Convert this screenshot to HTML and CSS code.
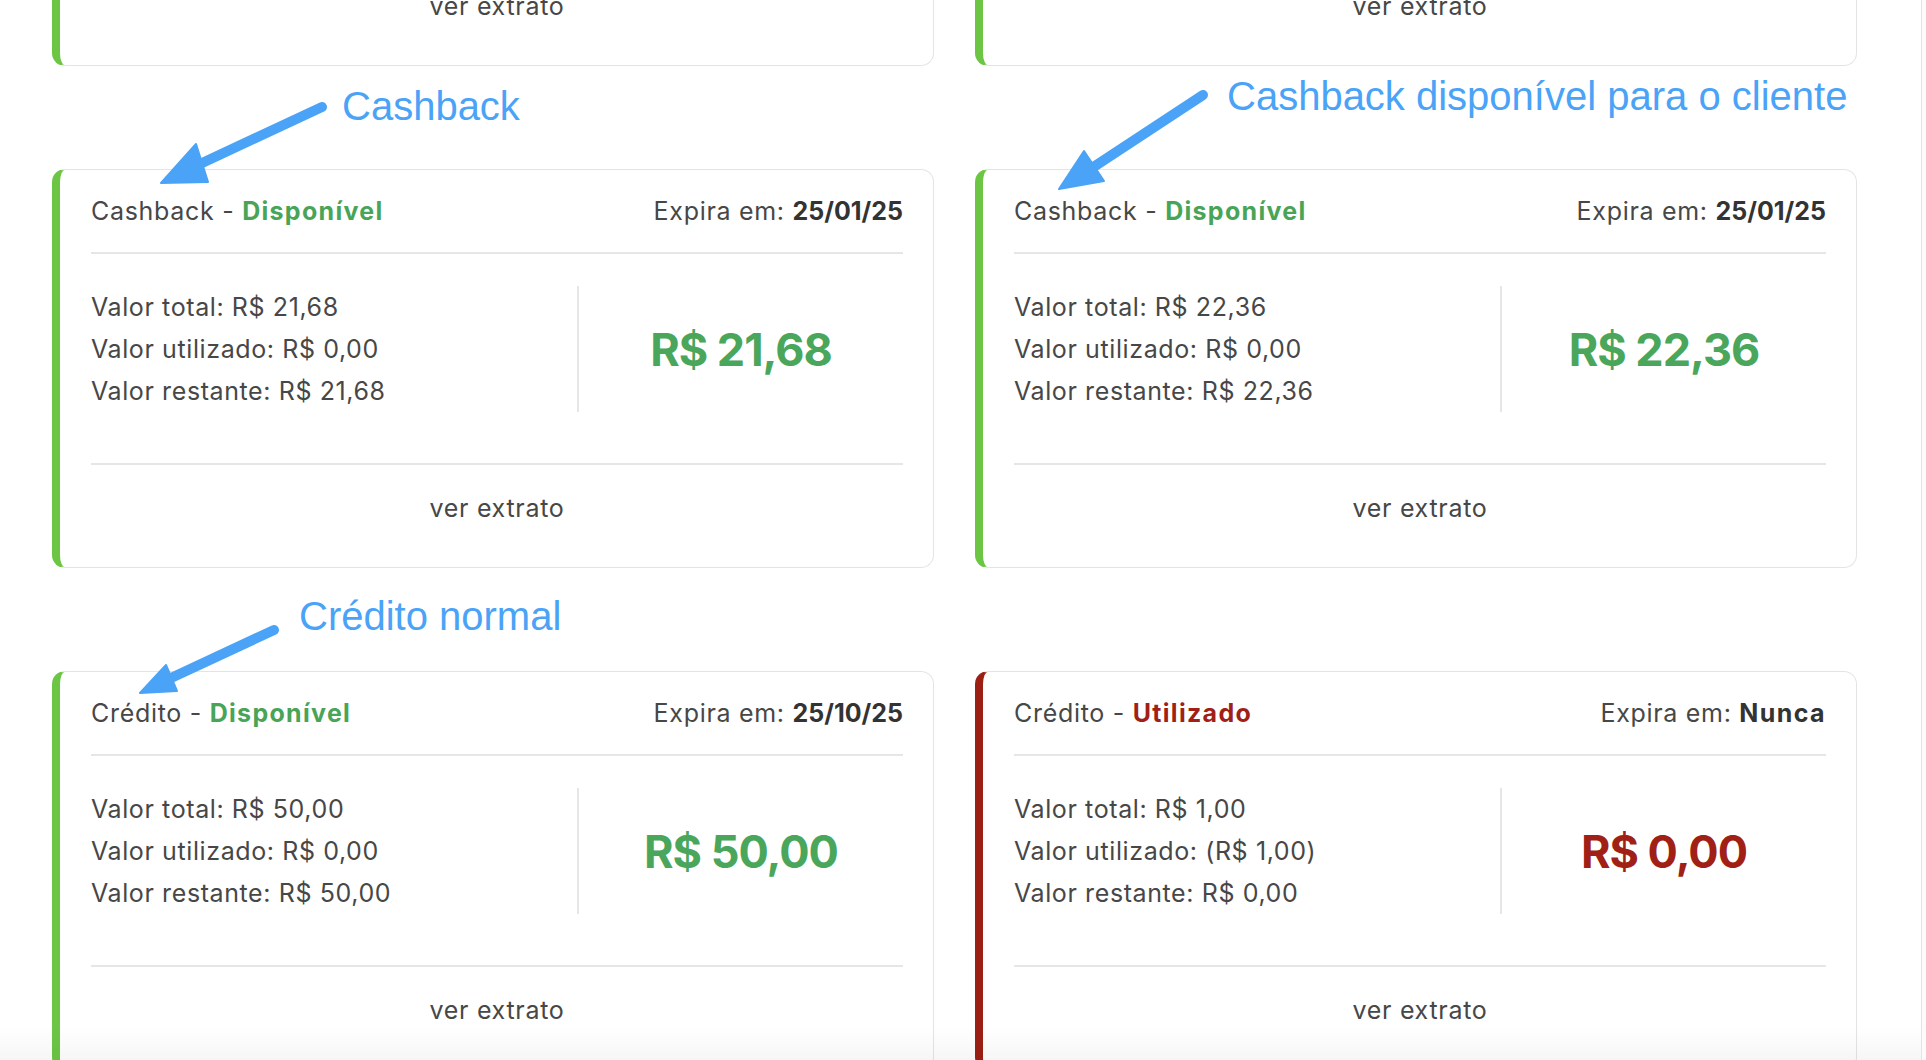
FILE: index.html
```html
<!DOCTYPE html>
<html lang="pt-BR">
<head>
<meta charset="utf-8">
<title>Créditos</title>
<link rel="stylesheet" href="styles.css">
</head>
<body>
<div class="page">
  <div class="grid">
    <div class="card">
      <div class="card-head"><span>Cashback - <b class="ok">Disponível</b></span><span>Expira em: <b>25/01/25</b></span></div>
      <div class="card-body">
        <div class="col-left"><div>Valor total: R$ 10,00</div><div>Valor utilizado: R$ 0,00</div><div>Valor restante: R$ 10,00</div></div>
        <div class="col-right"><span class="amount ok">R$ 10,00</span></div>
      </div>
      <div class="card-foot">ver extrato</div>
    </div>
    <div class="card">
      <div class="card-head"><span>Cashback - <b class="ok">Disponível</b></span><span>Expira em: <b>25/01/25</b></span></div>
      <div class="card-body">
        <div class="col-left"><div>Valor total: R$ 10,00</div><div>Valor utilizado: R$ 0,00</div><div>Valor restante: R$ 10,00</div></div>
        <div class="col-right"><span class="amount ok">R$ 10,00</span></div>
      </div>
      <div class="card-foot">ver extrato</div>
    </div>

    <div class="card">
      <div class="card-head"><span>Cashback - <b class="ok">Disponível</b></span><span>Expira em: <b>25/01/25</b></span></div>
      <div class="card-body">
        <div class="col-left"><div>Valor total: R$ 21,68</div><div>Valor utilizado: R$ 0,00</div><div>Valor restante: R$ 21,68</div></div>
        <div class="col-right"><span class="amount ok">R$ 21,68</span></div>
      </div>
      <div class="card-foot">ver extrato</div>
    </div>
    <div class="card">
      <div class="card-head"><span>Cashback - <b class="ok">Disponível</b></span><span>Expira em: <b>25/01/25</b></span></div>
      <div class="card-body">
        <div class="col-left"><div>Valor total: R$ 22,36</div><div>Valor utilizado: R$ 0,00</div><div>Valor restante: R$ 22,36</div></div>
        <div class="col-right"><span class="amount ok">R$ 22,36</span></div>
      </div>
      <div class="card-foot">ver extrato</div>
    </div>

    <div class="card">
      <div class="card-head"><span>Crédito - <b class="ok">Disponível</b></span><span>Expira em: <b>25/10/25</b></span></div>
      <div class="card-body">
        <div class="col-left"><div>Valor total: R$ 50,00</div><div>Valor utilizado: R$ 0,00</div><div>Valor restante: R$ 50,00</div></div>
        <div class="col-right"><span class="amount ok">R$ 50,00</span></div>
      </div>
      <div class="card-foot">ver extrato</div>
    </div>
    <div class="card used">
      <div class="card-head"><span>Crédito - <b class="bad">Utilizado</b></span><span>Expira em: <b class="word">Nunca</b></span></div>
      <div class="card-body">
        <div class="col-left"><div>Valor total: R$ 1,00</div><div>Valor utilizado: (R$ 1,00)</div><div>Valor restante: R$ 0,00</div></div>
        <div class="col-right"><span class="amount bad">R$ 0,00</span></div>
      </div>
      <div class="card-foot">ver extrato</div>
    </div>
  </div>

  <svg class="notes" width="1926" height="1060" viewBox="0 0 1926 1060">
    <g class="arrow">
      <line x1="322" y1="107" x2="200" y2="164"/>
      <polygon points="161,183 196,144 208,182"/>
      <line x1="1203" y1="95" x2="1092" y2="168"/>
      <polygon points="1059,189 1084,151 1104,181"/>
      <line x1="274" y1="630" x2="171" y2="678"/>
      <polygon points="140,693 166,665 177,691"/>
    </g>
    <text class="note" x="342" y="119.5">Cashback</text>
    <text class="note" x="1227" y="109.5">Cashback disponível para o cliente</text>
    <text class="note" x="299" y="630">Crédito normal</text>
  </svg>
  <div class="fade"></div>
  <div class="track"></div>
</div>
</body>
</html>
```
FILE: styles.css
```css
html, body {
  margin: 0;
  padding: 0;
  background: #ffffff;
}
body {
  font-family: Inter, "Noto Sans", "DejaVu Sans", sans-serif;
  color: #474747;
  overflow: hidden;
}
.page {
  position: relative;
  width: 1926px;
  height: 1060px;
  overflow: hidden;
}
.grid {
  display: grid;
  grid-template-columns: 882px 882px;
  column-gap: 41px;
  row-gap: 103px;
  padding-left: 52px;
  margin-top: -333px;
}
.card {
  box-sizing: border-box;
  height: 399px;
  border: 1.5px solid #e4e4e4;
  border-left: 8px solid #6cc644;
  border-radius: 13px;
  background: #fff;
  padding: 0 30px 0 31px;
  display: flex;
  flex-direction: column;
}
.card.used {
  border-left-color: #9c1f14;
}
.card-head {
  box-sizing: border-box;
  height: 84px;
  display: flex;
  justify-content: space-between;
  align-items: center;
  border-bottom: 2px solid #e6e6e6;
  font-size: 25px;
  letter-spacing: 0.7px;
}
.card-head b {
  font-weight: 700;
  color: #333;
  letter-spacing: 0;
}
.card-head b.word { letter-spacing: 1.4px; }
.card-head b.ok { color: #48a457; letter-spacing: 1.3px; }
.card-head b.bad { color: #a01f16; letter-spacing: 1.3px; }
.card-body {
  display: flex;
  padding: 32px 0 51px;
  border-bottom: 2px solid #e6e6e6;
}
.col-left {
  width: 486px;
  font-size: 25px;
  line-height: 42px;
  letter-spacing: 0.6px;
}
.col-right {
  flex: 1;
  border-left: 2px solid #e6e6e6;
  display: flex;
  align-items: center;
  justify-content: center;
}
.amount {
  font-size: 45px;
  font-weight: 700;
  letter-spacing: -1px;
}
.amount.ok { color: #4aa65b; }
.amount.bad { color: #a01f16; }
.card-foot {
  padding-top: 23px;
  line-height: 40px;
  font-size: 25px;
  letter-spacing: 0.7px;
  text-align: center;
}
.notes {
  position: absolute;
  left: 0;
  top: 0;
  pointer-events: none;
}
.arrow line {
  stroke: #4aa3f6;
  stroke-width: 10;
  stroke-linecap: round;
}
.arrow polygon {
  fill: #4aa3f6;
  stroke: #4aa3f6;
  stroke-width: 2;
  stroke-linejoin: round;
}
.note {
  font-family: "Liberation Sans", Arial, sans-serif;
  font-size: 40px;
  fill: #4aa3f6;
}
.fade {
  position: absolute;
  left: 0;
  right: 0;
  bottom: 0;
  height: 34px;
  background: linear-gradient(rgba(0,0,0,0), rgba(0,0,0,0.035));
}
.track {
  position: absolute;
  top: 0;
  right: 0;
  width: 4px;
  height: 100%;
  border-left: 1px solid #e3e3e3;
  background: #fbfbfb;
}
```
